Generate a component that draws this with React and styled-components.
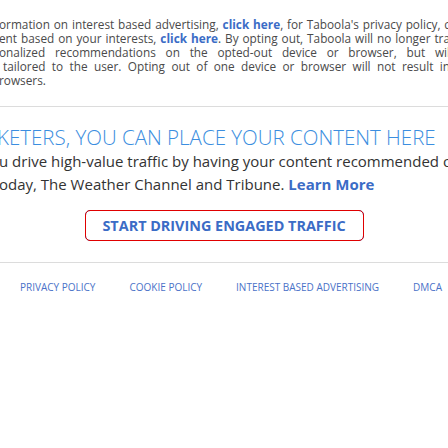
import React from 'react';
import styled, { createGlobalStyle } from 'styled-components';

const GlobalStyle = createGlobalStyle`
  html, body {
    margin: 0;
    padding: 0;
    background: #fff;
  }
  body {
    font-family: "Open Sans", "Liberation Sans", sans-serif;
  }
`;

const Page = styled.div`
  width: 448px;
  height: 448px;
  overflow: hidden;
  padding-top: 17px;
  box-sizing: border-box;
`;

const Fine = styled.div`
  margin: 0 -2px 0 -1px;
  font-size: 11.8px;
  line-height: 14px;
  color: #4a4a4a;
`;

const FineLine = styled.div`
  white-space: nowrap;
  text-align: ${(p) => (p.$last ? 'left' : 'justify')};
  text-align-last: ${(p) => (p.$last ? 'left' : 'justify')};
  padding-left: ${(p) => p.$indent || 0}px;
`;

const Strong = styled.a`
  font-weight: 700;
  color: #3b6cc6;
  text-decoration: none;
`;

const Rule = styled.hr`
  border: 0;
  border-top: 1px solid #dcdcdc;
  margin: ${(p) => p.$top}px 0 0;
`;

const Heading = styled.h2`
  margin: 17px 0 0 -3px;
  font-size: 20.5px;
  line-height: 26px;
  font-weight: 300;
  color: #3b8ee0;
  white-space: nowrap;
`;

const Lead = styled.p`
  margin: 0 0 0 -1px;
  font-size: 15px;
  line-height: 23px;
  color: #333;
  white-space: nowrap;
`;

const CtaRow = styled.div`
  display: flex;
  justify-content: center;
  margin-top: 14px;
`;

const CtaButton = styled.button`
  width: 279px;
  height: 31px;
  padding: 0;
  border: 1px solid #3b6cc6;
  border-radius: 5px;
  outline: 1px solid #e00000;
  outline-offset: -1px;
  background: #fff;
  font-family: "Open Sans", "Liberation Sans", sans-serif;
  font-size: 14.4px;
  font-weight: 700;
  color: #3b6cc6;
  cursor: pointer;
`;

const FooterNav = styled.nav`
  display: flex;
  gap: 34px;
  padding: 17px 0 0 20px;
  white-space: nowrap;
`;

const FooterLink = styled.a`
  font-size: 10px;
  line-height: 14px;
  color: #4a72c8;
  text-decoration: none;
  text-transform: uppercase;
`;

const App = () => {
  return (
    <Page>
      <GlobalStyle />
      <Fine>
        <FineLine>
          ormation on interest based advertising, <Strong href="#">click here</Strong>, for Taboola's privacy policy, c
        </FineLine>
        <FineLine>
          ent based on your interests, <Strong href="#">click here</Strong>. By opting out, Taboola will no longer tra
        </FineLine>
        <FineLine>onalized recommendations on the opted-out device or browser, but wil</FineLine>
        <FineLine $indent={4}>tailored to the user. Opting out of one device or browser will not result in</FineLine>
        <FineLine $last>rowsers.</FineLine>
      </Fine>
      <Rule $top={19} />
      <Heading>KETERS, YOU CAN PLACE YOUR CONTENT HERE</Heading>
      <Lead>
        u drive high-value traffic by having your content recommended o
        <br />
        oday, The Weather Channel and Tribune. <Strong href="#">Learn More</Strong>
      </Lead>
      <CtaRow>
        <CtaButton>START DRIVING ENGAGED TRAFFIC</CtaButton>
      </CtaRow>
      <Rule $top={21} />
      <FooterNav>
        <FooterLink href="#">Privacy Policy</FooterLink>
        <FooterLink href="#">Cookie Policy</FooterLink>
        <FooterLink href="#">Interest Based Advertising</FooterLink>
        <FooterLink href="#">DMCA</FooterLink>
      </FooterNav>
    </Page>
  );
};

export default App;
